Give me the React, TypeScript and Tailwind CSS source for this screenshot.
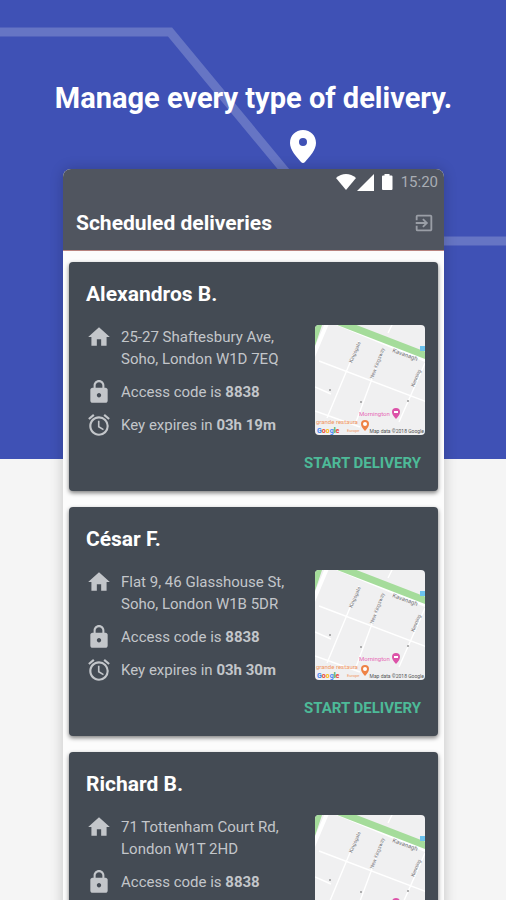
import { MdAlarm, MdExitToApp, MdHome, MdLock } from "react-icons/md";
import type { ReactNode } from "react";

interface Delivery {
  id: number;
  name: string;
  address: [string, string];
  code: string;
  expires: string;
}

const deliveries: Delivery[] = [
  { id: 1, name: "Alexandros B.", address: ["25-27 Shaftesbury Ave,", "Soho, London W1D 7EQ"], code: "8838", expires: "03h 19m" },
  { id: 2, name: "César F.", address: ["Flat 9, 46 Glasshouse St,", "Soho, London W1B 5DR"], code: "8838", expires: "03h 30m" },
  { id: 3, name: "Richard B.", address: ["71 Tottenham Court Rd,", "London W1T 2HD"], code: "8838", expires: "03h 45m" },
];

function Backdrop() {
  return (
    <div className="absolute inset-x-0 top-0 -z-10 h-[51%] overflow-hidden bg-[#3f51b5]">
      <svg width="506" height="459" viewBox="0 0 506 459" fill="none" aria-hidden="true">
        <path d="M0 32H170L343 241H506" stroke="#6675c4" strokeWidth="9" />
      </svg>
    </div>
  );
}

function StatusBar() {
  return (
    <div className="flex h-[26px] items-center justify-end pr-[6px] text-[15px] text-[#a9adb4]">
      <svg width="57" height="18" viewBox="0 0 57 18" fill="#fff" aria-hidden="true">
        <path d="M0 5C6-.4 14-.4 20 5L10 17Z" />
        <path d="M38 1V18H21Z" />
        <path d="M48.500 1H53.500V2.500H55.500Q56.500 2.500 56.500 3.500V16Q56.500 17 55.500 17H47Q46 17 46 16V3.500Q46 2.500 47 2.500H48.500Z" />
      </svg>
      <span className="ml-2">15:20</span>
    </div>
  );
}

function MapPreview() {
  return (
    <svg className="size-[110px] shrink-0 rounded-[4px]" viewBox="0 0 110 110" role="img" aria-label="Map" fontFamily="Roboto, sans-serif">
      <rect width="110" height="110" fill="#f0f0f1" />
      <path d="M0 0H7L0 21Z" fill="#a5dc9b" />
      <g stroke="#fff" fill="none">
        <path d="M13-4L-3 34" strokeWidth="4" />
        <path d="M18-4L112 35" strokeWidth="5" />
        <path d="M4 36L112 77M44 16L12 93M68 24L41 97M110 38L84 97M0 86L45 102M78-2L73 8M0 62L16 69" strokeWidth="1.400" />
      </g>
      <path d="M24-3L112 31" stroke="#a5dc9b" strokeWidth="7" />
      <path d="M105 21H110V26H105Z" fill="#6cc3ef" />
      <g fill="#77777b" fontSize="5">
        <text transform="translate(37 38) rotate(-67)">Kingsgate</text>
        <text transform="translate(58 54) rotate(-69)">New Kingsway</text>
        <text transform="translate(99 62) rotate(-67)">Kenning</text>
        <text transform="translate(77 27) rotate(20)" fontSize="6">Kavanagh</text>
      </g>
      <g fill="#999">
        <circle cx="15" cy="65" r="1" />
        <circle cx="46" cy="77" r="1" />
        <circle cx="93" cy="76" r="1" />
      </g>
      <text x="44" y="91" fontSize="6" fill="#e66bb5">Mornington</text>
      <path d="M81 83Q85 83 85 87Q85 90 81 94Q77 90 77 87Q77 83 81 83Z" fill="#dc52a8" />
      <path d="M79 86H83V88H79Z" fill="#fff" />
      <text x="1" y="99" fontSize="6" fill="#f0965f">grande restaura</text>
      <text x="32" y="107" fontSize="4" fill="#f0965f">Europe</text>
      <path d="M50 95Q54 95 54 99Q54 102 50 106Q46 102 46 99Q46 95 50 95Z" fill="#ee8245" />
      <circle cx="50" cy="99" r="2" fill="#fff" />
      <text x="2" y="108" fontSize="7" fontWeight="700">
        <tspan fill="#4285f4">G</tspan>
        <tspan fill="#ea4335">o</tspan>
        <tspan fill="#fbbc05">o</tspan>
        <tspan fill="#4285f4">g</tspan>
        <tspan fill="#34a853">l</tspan>
        <tspan fill="#ea4335">e</tspan>
      </text>
      <text x="109" y="108" fontSize="5" textAnchor="end" fill="#555">Map data ©2018 Google</text>
    </svg>
  );
}

function DetailRow({ icon, children }: { icon: ReactNode; children: ReactNode }) {
  return (
    <li className="flex gap-[9px]">
      <span className="flex h-[22px] shrink-0 items-center">{icon}</span>
      <span>{children}</span>
    </li>
  );
}

function DeliveryCard({ delivery }: { delivery: Delivery }) {
  return (
    <article className="rounded-[4px] bg-[#444b54] pt-[18px] pr-[13px] pb-4 pl-[17px] shadow-[0_2px_4px_rgba(0,0,0,0.5)]">
      <h2 className="text-[21px] leading-7 font-bold text-white">{delivery.name}</h2>
      <div className="mt-[17px] flex items-start justify-between">
        <ul className="flex flex-col gap-[11px] pt-px text-[15px] leading-[22px] text-[#c3c6ca]">
          <DetailRow icon={<MdHome size={26} />}>
            {delivery.address[0]}
            <br />
            {delivery.address[1]}
          </DetailRow>
          <DetailRow icon={<MdLock size={26} />}>
            Access code is <b>{delivery.code}</b>
          </DetailRow>
          <DetailRow icon={<MdAlarm size={26} />}>
            Key expires in <b>{delivery.expires}</b>
          </DetailRow>
        </ul>
        <MapPreview />
      </div>
      <div className="mt-[15px] flex justify-end pr-1">
        <button type="button" className="text-[15px] leading-6 font-bold text-[#4dba98]">START DELIVERY</button>
      </div>
    </article>
  );
}

export default function App() {
  return (
    <main className="relative isolate h-screen overflow-hidden bg-[#f5f5f5] pr-[62px] pl-[63px] font-[Roboto,sans-serif]">
      <Backdrop />
      <h1 className="-mx-10 pt-20 text-center text-[29px] leading-9 font-bold whitespace-nowrap text-white">Manage every type of delivery.</h1>
      <svg className="mx-auto mt-[14px] translate-x-[49px]" width="26" height="33" viewBox="0 0 26 33" aria-hidden="true">
        <path fillRule="evenodd" d="M13 0C20.500 0 26 5.500 26 13C26 20 20 26 15 32Q13 34 11 32C6 26 0 20 0 13C0 5.500 5.500 0 13 0ZM13 8A4 4 0 1 0 13 16A4 4 0 1 0 13 8Z" fill="#fff" />
      </svg>
      <section className="mt-[6px] rounded-t-[8px] bg-[#fcfcfc] shadow-[0_0_14px_rgba(0,0,0,0.2)]">
        <header className="rounded-t-[8px] border-b border-[#b8837f] bg-[#50555f]">
          <StatusBar />
          <div className="flex h-[55px] items-center justify-between pr-[9px] pl-[13px]">
            <h2 className="text-[21px] leading-7 font-bold text-white">Scheduled deliveries</h2>
            <button type="button" aria-label="Sign out" className="text-[#9a9ea6]">
              <MdExitToApp size={22} />
            </button>
          </div>
        </header>
        <div className="flex flex-col gap-4 px-[6px] pt-[11px] pb-4">
          {deliveries.map((delivery) => (
            <DeliveryCard key={delivery.id} delivery={delivery} />
          ))}
        </div>
      </section>
    </main>
  );
}
